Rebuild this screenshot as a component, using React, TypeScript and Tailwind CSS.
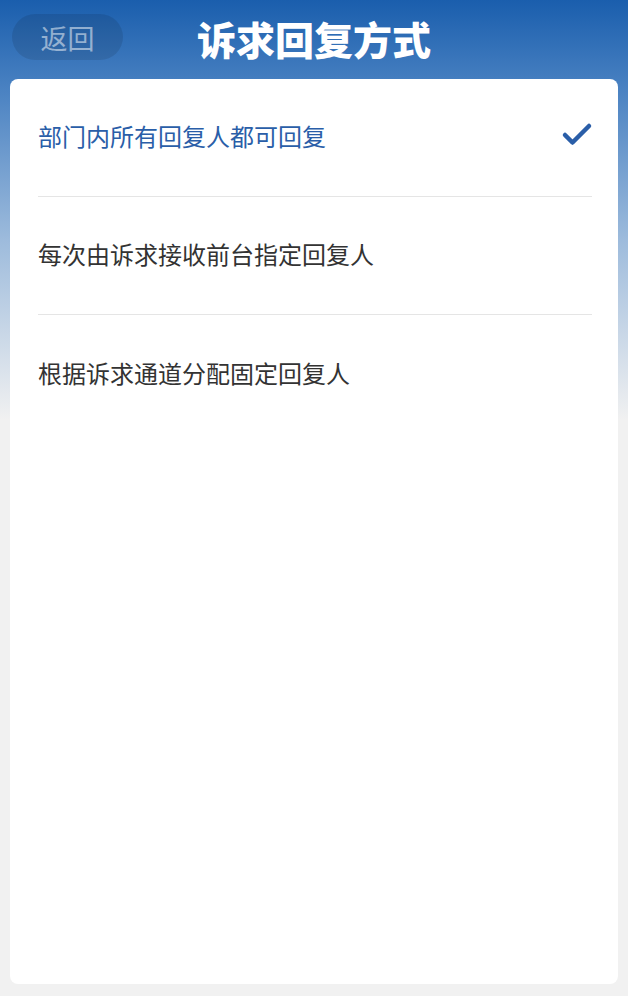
import { Check } from 'lucide-react'

const options = [
  '部门内所有回复人都可回复',
  '每次由诉求接收前台指定回复人',
  '根据诉求通道分配固定回复人',
]

export default function App() {
  const selected = 0

  return (
    <div
      className="min-h-[996px] flex flex-col bg-[#f1f1f1] bg-[linear-gradient(to_bottom,#1a5ead_0px,#4a82c2_90px,#9dbbdc_240px,#f1f1f1_420px)]"
      style={{ fontFamily: '"Noto Sans CJK SC", "Noto Sans", sans-serif' }}
    >
      <header className="relative h-[79px] flex items-center justify-center">
        <button className="absolute left-[12px] top-[14px] w-[111px] h-[46px] rounded-full bg-black/10 text-white/50 text-[27px] leading-none">
          返回
        </button>
        <h1 className="text-white text-[39px] font-black leading-none -mt-[3px]">诉求回复方式</h1>
      </header>

      <div className="flex-1 mx-[10px] mb-[12px] rounded-lg bg-white pl-[28px] pr-[26px]">
        {options.map((label, i) => (
          <div
            key={label}
            className={`h-[118px] flex items-center justify-between ${i < options.length - 1 ? 'border-b border-[#e5e5e5]' : ''}`}
          >
            <span className={`text-[24px] leading-none -mt-[3px] ${i === selected ? 'text-[#2a5ea8]' : 'text-[#333333]'}`}>
              {label}
            </span>
            {i === selected && <Check size={36} strokeWidth={3} className="text-[#2a5ea8] -mt-[6px] -mr-[3px]" />}
          </div>
        ))}
      </div>
    </div>
  )
}
